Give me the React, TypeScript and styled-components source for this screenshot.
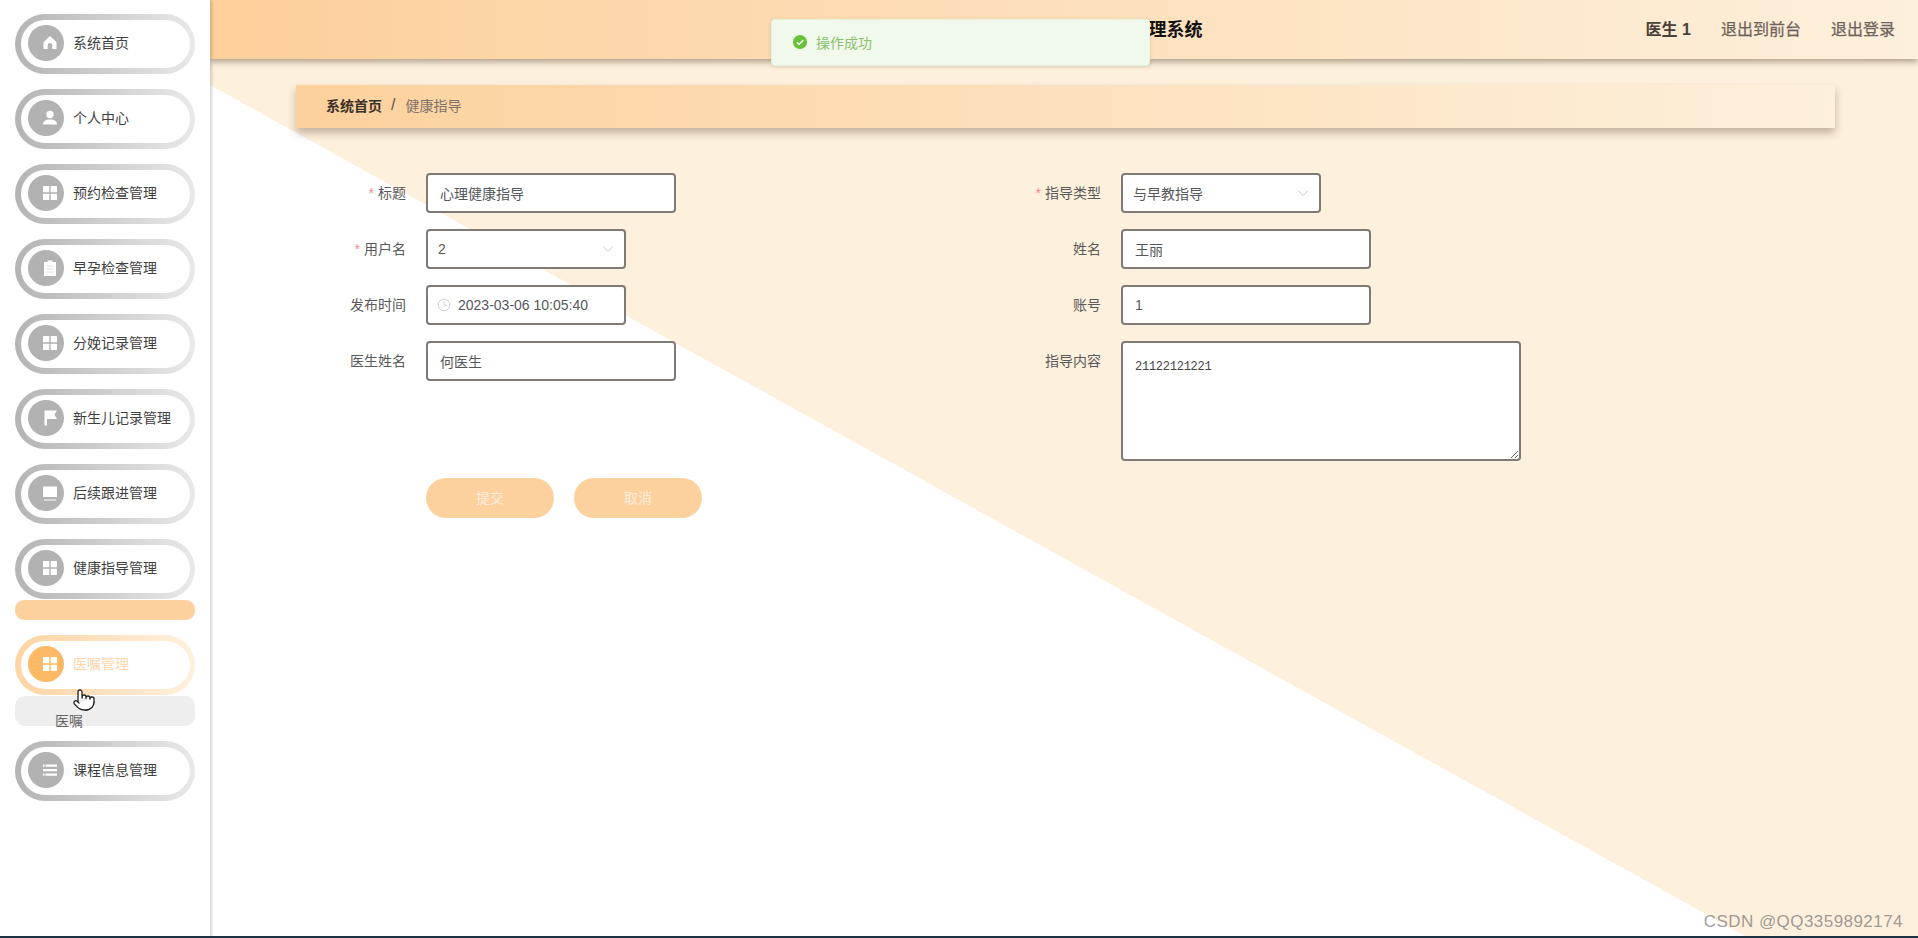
import React from 'react';
import styled, { createGlobalStyle } from 'styled-components';
import { Pointer } from 'lucide-react';

const cream = '#fdf0dc';
const orange = '#fdd19d';

const GlobalStyle = createGlobalStyle`
  html, body, #root {
    margin: 0;
    height: 100%;
  }
  body {
    overflow: hidden;
    font-family: "Liberation Sans", "Noto Sans CJK SC", sans-serif;
    font-size: 14px;
    color: #606266;
  }
`;

const Layout = styled.div`
  display: flex;
  height: 938px;
  position: relative;
  overflow: hidden;
`;

const Sidebar = styled.aside`
  flex: 0 0 210px;
  box-sizing: border-box;
  padding: 14px 0 0 15px;
  background: #fff;
  box-shadow: 2px 0 3px rgba(0, 0, 0, 0.16);
  z-index: 2;
`;

const MenuPill = styled.div<{ $active?: boolean; $tight?: boolean }>`
  box-sizing: border-box;
  display: flex;
  align-items: center;
  gap: 9px;
  width: 180px;
  height: 60px;
  margin-bottom: ${(p) => (p.$tight ? '1px' : '15px')};
  padding: 0 0 2px 7px;
  border: 6px solid transparent;
  border-right-width: 5px;
  border-radius: 30px;
  background:
    linear-gradient(#fff, #fff) padding-box,
    ${(p) =>
        p.$active
          ? 'linear-gradient(to right, #fdd4a4, #fff0dd)'
          : 'linear-gradient(to right, #b4b4b4, #e9e9e9)'}
      border-box;
  color: ${(p) => (p.$active ? '#fdd6ab' : '#3f3f3f')};
`;

const MenuLabel = styled.span`
  padding-bottom: 2px;
`;

const IconCircle = styled.span<{ $active?: boolean }>`
  flex: 0 0 36px;
  box-sizing: border-box;
  height: 36px;
  display: flex;
  align-items: center;
  justify-content: center;
  padding-left: 7px;
  border-radius: 50%;
  background: ${(p) => (p.$active ? '#fdb965' : '#b2b2b2')};
`;

const OrangeBar = styled.div`
  width: 180px;
  height: 20px;
  margin-bottom: 15px;
  border-radius: 9px;
  background: ${orange};
`;

const SubMenu = styled.div`
  box-sizing: border-box;
  width: 180px;
  height: 30px;
  margin-bottom: 15px;
  padding: 17px 0 0 40px;
  border-radius: 10px;
  background: #eeeeee;
  line-height: 17px;
  color: #666;
`;

const Main = styled.main`
  flex: 1;
  min-width: 0;
  background-color: ${cream};
  background-image: linear-gradient(to top right, #fff 50%, ${cream} 50%);
  background-repeat: no-repeat;
  background-size: 1539px 853px;
  background-position: 0 85px;
`;

const Header = styled.header`
  display: flex;
  align-items: center;
  height: 59px;
  padding: 0 23px 4px 0;
  box-sizing: border-box;
  background: linear-gradient(to right, #fdcf9b, ${cream});
  box-shadow: 0 3px 6px rgba(60, 40, 20, 0.4);
`;

const Title = styled.div`
  flex: 1;
  margin-right: 443px;
  text-align: right;
  font-size: 18px;
  font-weight: 700;
  color: #111;
`;

const UserName = styled.span`
  font-size: 16px;
  font-weight: 700;
  color: #4a4036;
`;

const HeaderLink = styled.a`
  margin-left: 30px;
  font-size: 16px;
  color: #6e635b;
  -webkit-text-stroke: 0.25px #6e635b;
`;

const Breadcrumb = styled.nav`
  display: flex;
  align-items: center;
  box-sizing: border-box;
  height: 43px;
  margin: 26px 83px 0 86px;
  padding: 0 0 4px 30px;
  background: linear-gradient(to right, ${orange}, ${cream});
  box-shadow: 0 5px 8px rgba(60, 40, 20, 0.3);
`;

const CrumbHome = styled.span`
  font-weight: 700;
  color: #3a3028;
`;

const CrumbSep = styled.span`
  margin: 0 10px 0 9px;
  font-size: 16px;
  color: #5c5148;
`;

const CrumbCurrent = styled.span`
  color: #7d726a;
`;

const Form = styled.form`
  display: grid;
  grid-template-columns: 695px 694px;
  row-gap: 16px;
  margin: 45px 0 0 85px;
`;

const Row = styled.div`
  display: flex;
  align-items: flex-start;
`;

const Label = styled.label`
  flex: 0 0 131px;
  box-sizing: border-box;
  padding-right: 20px;
  line-height: 40px;
  text-align: right;
  color: #5a5a5a;
`;

const Required = styled.i`
  margin-right: 4px;
  font-style: normal;
  color: #f08a8a;
`;

const Box = styled.div<{ $width: number }>`
  box-sizing: border-box;
  display: flex;
  align-items: center;
  width: ${(p) => p.$width}px;
  height: 40px;
  border: 2px solid #807a76;
  border-radius: 4px;
  background: #fff;
`;

const TextInput = styled.input`
  flex: 1;
  min-width: 0;
  height: 100%;
  padding: 0 0 0 12px;
  border: 0;
  outline: 0;
  background: transparent;
  font: inherit;
  color: #55575b;
`;

const SelectValue = styled(TextInput)`
  padding-left: 10px;
`;

const DateValue = styled(TextInput)`
  padding-left: 7px;
`;

const Chevron = styled.svg`
  flex: 0 0 12px;
  margin-right: 10px;
`;

const Clock = styled.svg`
  flex: 0 0 14px;
  margin-left: 9px;
`;

const Area = styled.textarea`
  box-sizing: border-box;
  display: block;
  width: 400px;
  height: 120px;
  padding: 17px 12px;
  border: 2px solid #807a76;
  border-radius: 4px;
  outline: 0;
  background: #fff;
  font-family: "Liberation Mono", monospace;
  font-size: 12px;
  letter-spacing: -0.25px;
  color: #444;
`;

const Actions = styled.div`
  display: flex;
  gap: 20px;
  margin: 17px 0 0 216px;
`;

const ActionButton = styled.button`
  width: 128px;
  height: 40px;
  padding: 0 0 2px;
  border: 0;
  border-radius: 20px;
  background: ${orange};
  font: inherit;
  color: #fdeedd;
`;

const Toast = styled.div`
  position: absolute;
  top: 19px;
  left: 771px;
  box-sizing: border-box;
  display: flex;
  align-items: center;
  gap: 9px;
  width: 379px;
  height: 47px;
  padding: 0 0 2px 21px;
  border: 1px solid #e8f3de;
  border-radius: 4px;
  background: #f0f9eb;
  box-shadow: 0 1px 4px rgba(120, 100, 60, 0.2);
  color: #8cc06b;
  z-index: 5;
`;

const Watermark = styled.div`
  position: absolute;
  right: 15px;
  bottom: 6px;
  font-size: 17px;
  letter-spacing: 0.45px;
  color: rgba(110, 110, 110, 0.68);
  z-index: 5;
`;

const BottomEdge = styled.div`
  position: absolute;
  left: 0;
  right: 0;
  bottom: 0;
  height: 2px;
  background: #1d3242;
  z-index: 6;
`;

const HandCursor = styled.div`
  position: absolute;
  left: 72px;
  top: 688px;
  width: 24px;
  height: 24px;
  z-index: 7;
`;

const Glyph: React.FC<{ children: React.ReactNode }> = ({ children }) => (
  <svg width="18" height="18" viewBox="0 0 18 18" fill="#fff">
    {children}
  </svg>
);

const HomeIcon = () => (
  <Glyph>
    <path d="M9 2 2.500 8.200V15h4.200v-3.600a2.300 2.300 0 0 1 4.600 0V15h4.200V8.200z" />
  </Glyph>
);
const UserIcon = () => (
  <Glyph>
    <circle cx="9" cy="5.500" r="3.700" />
    <path d="M2 15.500c0-3.400 2.600-5 7-5s7 1.600 7 5z" />
  </Glyph>
);
const GridIcon = () => (
  <Glyph>
    <rect x="2" y="2" width="6.300" height="6.300" rx="0.6" />
    <rect x="9.700" y="2" width="6.300" height="6.300" rx="0.6" />
    <rect x="2" y="9.700" width="6.300" height="6.300" rx="0.6" />
    <rect x="9.700" y="9.700" width="6.300" height="6.300" rx="0.6" />
  </Glyph>
);
const ClipboardIcon = () => (
  <Glyph>
    <path d="M6.500 1.500h5V3H15v14H3V3h3.500z" />
    <path d="M5.500 7h7M5.500 10h7M5.500 13h7" stroke="#d5d5d5" strokeWidth="0.8" />
  </Glyph>
);
const FlagIcon = () => (
  <Glyph>
    <path d="M3.500 1.500h12.500l-2.600 4 2.600 4.500H6v6.500H3.500z" />
  </Glyph>
);
const MonitorIcon = () => (
  <Glyph>
    <path d="M2 2.500h14v10.500H2z" />
    <path d="M3 15.500h12v1H3z" />
  </Glyph>
);
const ListIcon = () => (
  <Glyph>
    <path d="M4.500 3.500H16v2.200H4.500zM2 8h14v2.200H2zM4.500 12.500H16v2.200H4.500z" />
    <path d="M2 3.500h1.500v2.200H2zM2 12.500h1.500v2.200H2z" />
  </Glyph>
);

const ChevronDown = () => (
  <Chevron width="12" height="12" viewBox="0 0 12 12" fill="none" stroke="#c8c8c8" strokeWidth="1">
    <path d="M1.500 4 6 8.500 10.500 4" />
  </Chevron>
);

const ClockIcon = () => (
  <Clock width="14" height="14" viewBox="0 0 14 14" fill="none" stroke="#cfcfcf" strokeWidth="1">
    <circle cx="7" cy="7" r="5.800" />
    <path d="M7 3.500V7.300h3" />
  </Clock>
);

const Field: React.FC<{ label: string; required?: boolean; children: React.ReactNode }> = ({
  label,
  required,
  children,
}) => (
  <Row>
    <Label>
      {required && <Required>*</Required>}
      {label}
    </Label>
    {children}
  </Row>
);

const App: React.FC = () => (
  <Layout>
    <GlobalStyle />
    <Sidebar>
      <MenuPill>
        <IconCircle><HomeIcon /></IconCircle>
        <MenuLabel>系统首页</MenuLabel>
      </MenuPill>
      <MenuPill>
        <IconCircle><UserIcon /></IconCircle>
        <MenuLabel>个人中心</MenuLabel>
      </MenuPill>
      <MenuPill>
        <IconCircle><GridIcon /></IconCircle>
        <MenuLabel>预约检查管理</MenuLabel>
      </MenuPill>
      <MenuPill>
        <IconCircle><ClipboardIcon /></IconCircle>
        <MenuLabel>早孕检查管理</MenuLabel>
      </MenuPill>
      <MenuPill>
        <IconCircle><GridIcon /></IconCircle>
        <MenuLabel>分娩记录管理</MenuLabel>
      </MenuPill>
      <MenuPill>
        <IconCircle><FlagIcon /></IconCircle>
        <MenuLabel>新生儿记录管理</MenuLabel>
      </MenuPill>
      <MenuPill>
        <IconCircle><MonitorIcon /></IconCircle>
        <MenuLabel>后续跟进管理</MenuLabel>
      </MenuPill>
      <MenuPill $tight>
        <IconCircle><GridIcon /></IconCircle>
        <MenuLabel>健康指导管理</MenuLabel>
      </MenuPill>
      <OrangeBar />
      <MenuPill $active $tight>
        <IconCircle $active><GridIcon /></IconCircle>
        <MenuLabel>医嘱管理</MenuLabel>
      </MenuPill>
      <SubMenu>医嘱</SubMenu>
      <MenuPill>
        <IconCircle><ListIcon /></IconCircle>
        <MenuLabel>课程信息管理</MenuLabel>
      </MenuPill>
    </Sidebar>

    <Main>
      <Header>
        <Title>管理系统</Title>
        <UserName>医生 1</UserName>
        <HeaderLink>退出到前台</HeaderLink>
        <HeaderLink>退出登录</HeaderLink>
      </Header>

      <Breadcrumb>
        <CrumbHome>系统首页</CrumbHome>
        <CrumbSep>/</CrumbSep>
        <CrumbCurrent>健康指导</CrumbCurrent>
      </Breadcrumb>

      <Form>
        <Field label="标题" required>
          <Box $width={250}><TextInput readOnly defaultValue="心理健康指导" /></Box>
        </Field>
        <Field label="指导类型" required>
          <Box $width={200}>
            <SelectValue readOnly defaultValue="与早教指导" />
            <ChevronDown />
          </Box>
        </Field>
        <Field label="用户名" required>
          <Box $width={200}>
            <SelectValue readOnly defaultValue="2" />
            <ChevronDown />
          </Box>
        </Field>
        <Field label="姓名">
          <Box $width={250}><TextInput readOnly defaultValue="王丽" /></Box>
        </Field>
        <Field label="发布时间">
          <Box $width={200}>
            <ClockIcon />
            <DateValue readOnly defaultValue="2023-03-06 10:05:40" />
          </Box>
        </Field>
        <Field label="账号">
          <Box $width={250}><TextInput readOnly defaultValue="1" /></Box>
        </Field>
        <Field label="医生姓名">
          <Box $width={250}><TextInput readOnly defaultValue="何医生" /></Box>
        </Field>
        <Field label="指导内容">
          <Area readOnly defaultValue="21122121221" />
        </Field>
      </Form>

      <Actions>
        <ActionButton type="button">提交</ActionButton>
        <ActionButton type="button">取消</ActionButton>
      </Actions>
    </Main>

    <Toast>
      <svg width="14" height="14" viewBox="0 0 14 14">
        <circle cx="7" cy="7" r="7" fill="#67c23a" />
        <path d="M3.800 7.200 6.100 9.500 10.300 5" fill="none" stroke="#fff" strokeWidth="1.400" />
      </svg>
      操作成功
    </Toast>
    <HandCursor>
      <Pointer size={24} fill="#fff" color="#222" strokeWidth={1.3} />
    </HandCursor>
    <Watermark>CSDN @QQ3359892174</Watermark>
    <BottomEdge />
  </Layout>
);

export default App;
